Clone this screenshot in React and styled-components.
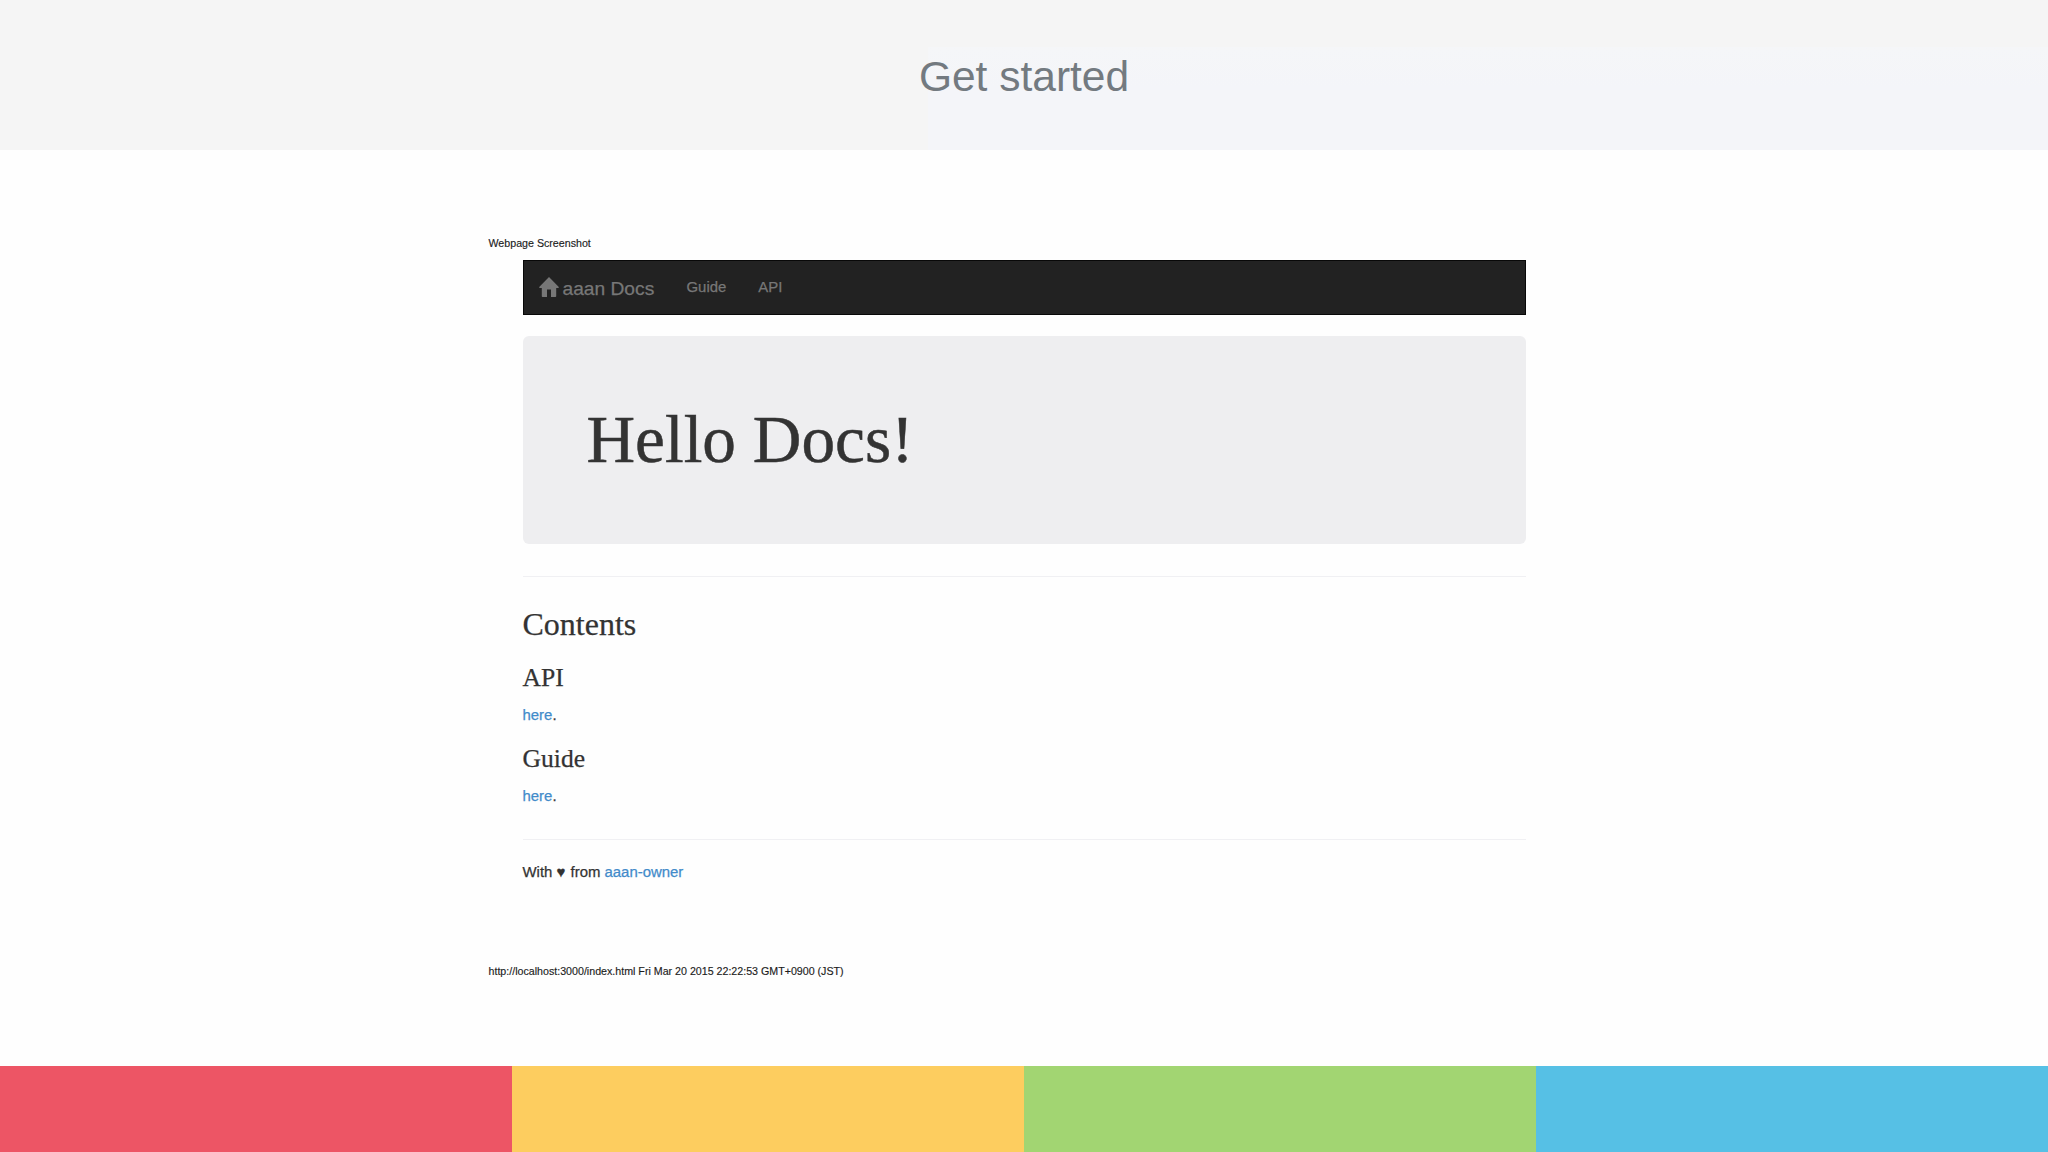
import React from 'react';
import styled, { createGlobalStyle } from "styled-components";

const GlobalStyle = createGlobalStyle`
  body {
    margin: 0;
    background: #fefefe;
    overflow: hidden;
  }
`

const StyledSlide = styled.div`
  display: flex;
  flex-direction: column;
  width: 2048px;
  height: 1152px;
  font-family: "Liberation Sans", Arial, sans-serif;
`

const StyledHeader = styled.header`
  display: flex;
  justify-content: center;
  box-sizing: border-box;
  height: 150px;
  padding-top: 52px;
  background: linear-gradient(#f5f6f8, #f4f5f9 40%) 100% 100% / 1120px 103px no-repeat #f5f5f5;
`

const StyledTitle = styled.h1`
  margin: 0;
  font-size: 42.5px;
  font-weight: 400;
  line-height: 49px;
  color: #737a80;
`

const StyledMain = styled.main`
  display: flex;
  flex-direction: column;
  flex-grow: 1;
  box-sizing: border-box;
  width: 1071px;
  margin: 0 auto;
  padding-top: 87px;
`

const StyledCaption = styled.p`
  margin: 0;
  font-size: 10.67px;
  line-height: 13px;
  color: #1c1c1c;
  -webkit-text-stroke: 0.15px;
`

const StyledPage = styled.section`
  display: flex;
  flex-direction: column;
  height: 705px;
  margin: 10px 34px 0;
  font-size: 14.93px;
  line-height: 21px;
  color: #333333;
  -webkit-text-stroke: 0.25px;
`

const StyledNav = styled.nav`
  display: flex;
  align-items: flex-start;
  box-sizing: border-box;
  height: 55px;
  padding-left: 15px;
  background: #222222;
  border: 1px solid #080808;
  color: #777777;
`

const StyledBrand = styled.span`
  display: flex;
  width: 148px;
  padding-top: 16px;
  font-size: 19.2px;
  line-height: 24px;
`

const StyledHomeIcon = styled.svg`
  width: 20px;
  height: 20px;
  margin-right: 4px;
`

const StyledNavLink = styled.a`
  margin-right: 32px;
  padding-top: 15px;
`

const StyledJumbotron = styled.div`
  box-sizing: border-box;
  height: 208px;
  margin-top: 21px;
  padding: 65px 64px 0;
  border-radius: 6px;
  background: #eeeef0;
`

const StyledHello = styled.h1`
  margin: 0;
  font-family: "Liberation Serif", "Times New Roman", serif;
  font-size: 67.3px;
  font-weight: 400;
  line-height: 78px;
  -webkit-text-stroke: 0.5px;
`

const StyledRule = styled.hr`
  width: 100%;
  height: 1px;
  margin: ${props => props.$top}px 0 0;
  border: 0;
  background: #f0f0f3;
`

const StyledHeading = styled.h2`
  margin: ${props => props.$top}px 0 0;
  font-family: "Liberation Serif", "Times New Roman", serif;
  font-size: ${props => props.$small ? "25.6px" : "32px"};
  font-weight: 400;
  line-height: ${props => props.$small ? "30px" : "36px"};
`

const StyledText = styled.p`
  margin: ${props => props.$top}px 0 0;
`

const StyledLink = styled.a`
  color: #428bca;
`

const StyledStripes = styled.footer`
  display: flex;
  height: 86px;
`

const StyledStripe = styled.div`
  flex: 1;
  background: ${props => props.color};
`

const StyledHeart = styled.span`
  margin-right: 1px;
`

const sections = ["API", "Guide"]
const stripes = ["#ed5565", "#fdcd5f", "#a2d572", "#56c0e5"]

const App = () => {
  return (
    <>
      <GlobalStyle />
      <StyledSlide>
        <StyledHeader>
          <StyledTitle>Get started</StyledTitle>
        </StyledHeader>
        <StyledMain>
          <StyledCaption>Webpage Screenshot</StyledCaption>
          <StyledPage>
            <StyledNav>
              <StyledBrand>
                <StyledHomeIcon viewBox="0 0 20 20" fill="currentColor">
                  <path d="M10 0 L19.8 10 Q20 11 19.2 11 H17.2 V19.2 Q17.2 20 16.4 20 H12 V12.5 H8 V20 H3.6 Q2.8 20 2.8 19.2 V11 H0.8 Q0 11 0.2 10 Z" />
                </StyledHomeIcon>
                aaan Docs
              </StyledBrand>
              <StyledNavLink>Guide</StyledNavLink>
              <StyledNavLink>API</StyledNavLink>
            </StyledNav>
            <StyledJumbotron>
              <StyledHello>Hello Docs!</StyledHello>
            </StyledJumbotron>
            <StyledRule $top={32} />
            <StyledHeading $top={29}>Contents</StyledHeading>
            {sections.map((name, i) => (
              <React.Fragment key={name}>
                <StyledHeading $small $top={i ? 19 : 21}>{name}</StyledHeading>
                <StyledText $top={11}><StyledLink>here</StyledLink>.</StyledText>
              </React.Fragment>
            ))}
            <StyledRule $top={33} />
            <StyledText $top={21}>With <StyledHeart>♥</StyledHeart> from <StyledLink>aaan-owner</StyledLink></StyledText>
          </StyledPage>
          <StyledCaption>http://localhost:3000/index.html Fri Mar 20 2015 22:22:53 GMT+0900 (JST)</StyledCaption>
        </StyledMain>
        <StyledStripes>
          {stripes.map(color => <StyledStripe key={color} color={color} />)}
        </StyledStripes>
      </StyledSlide>
    </>
  )
}

export default App;
